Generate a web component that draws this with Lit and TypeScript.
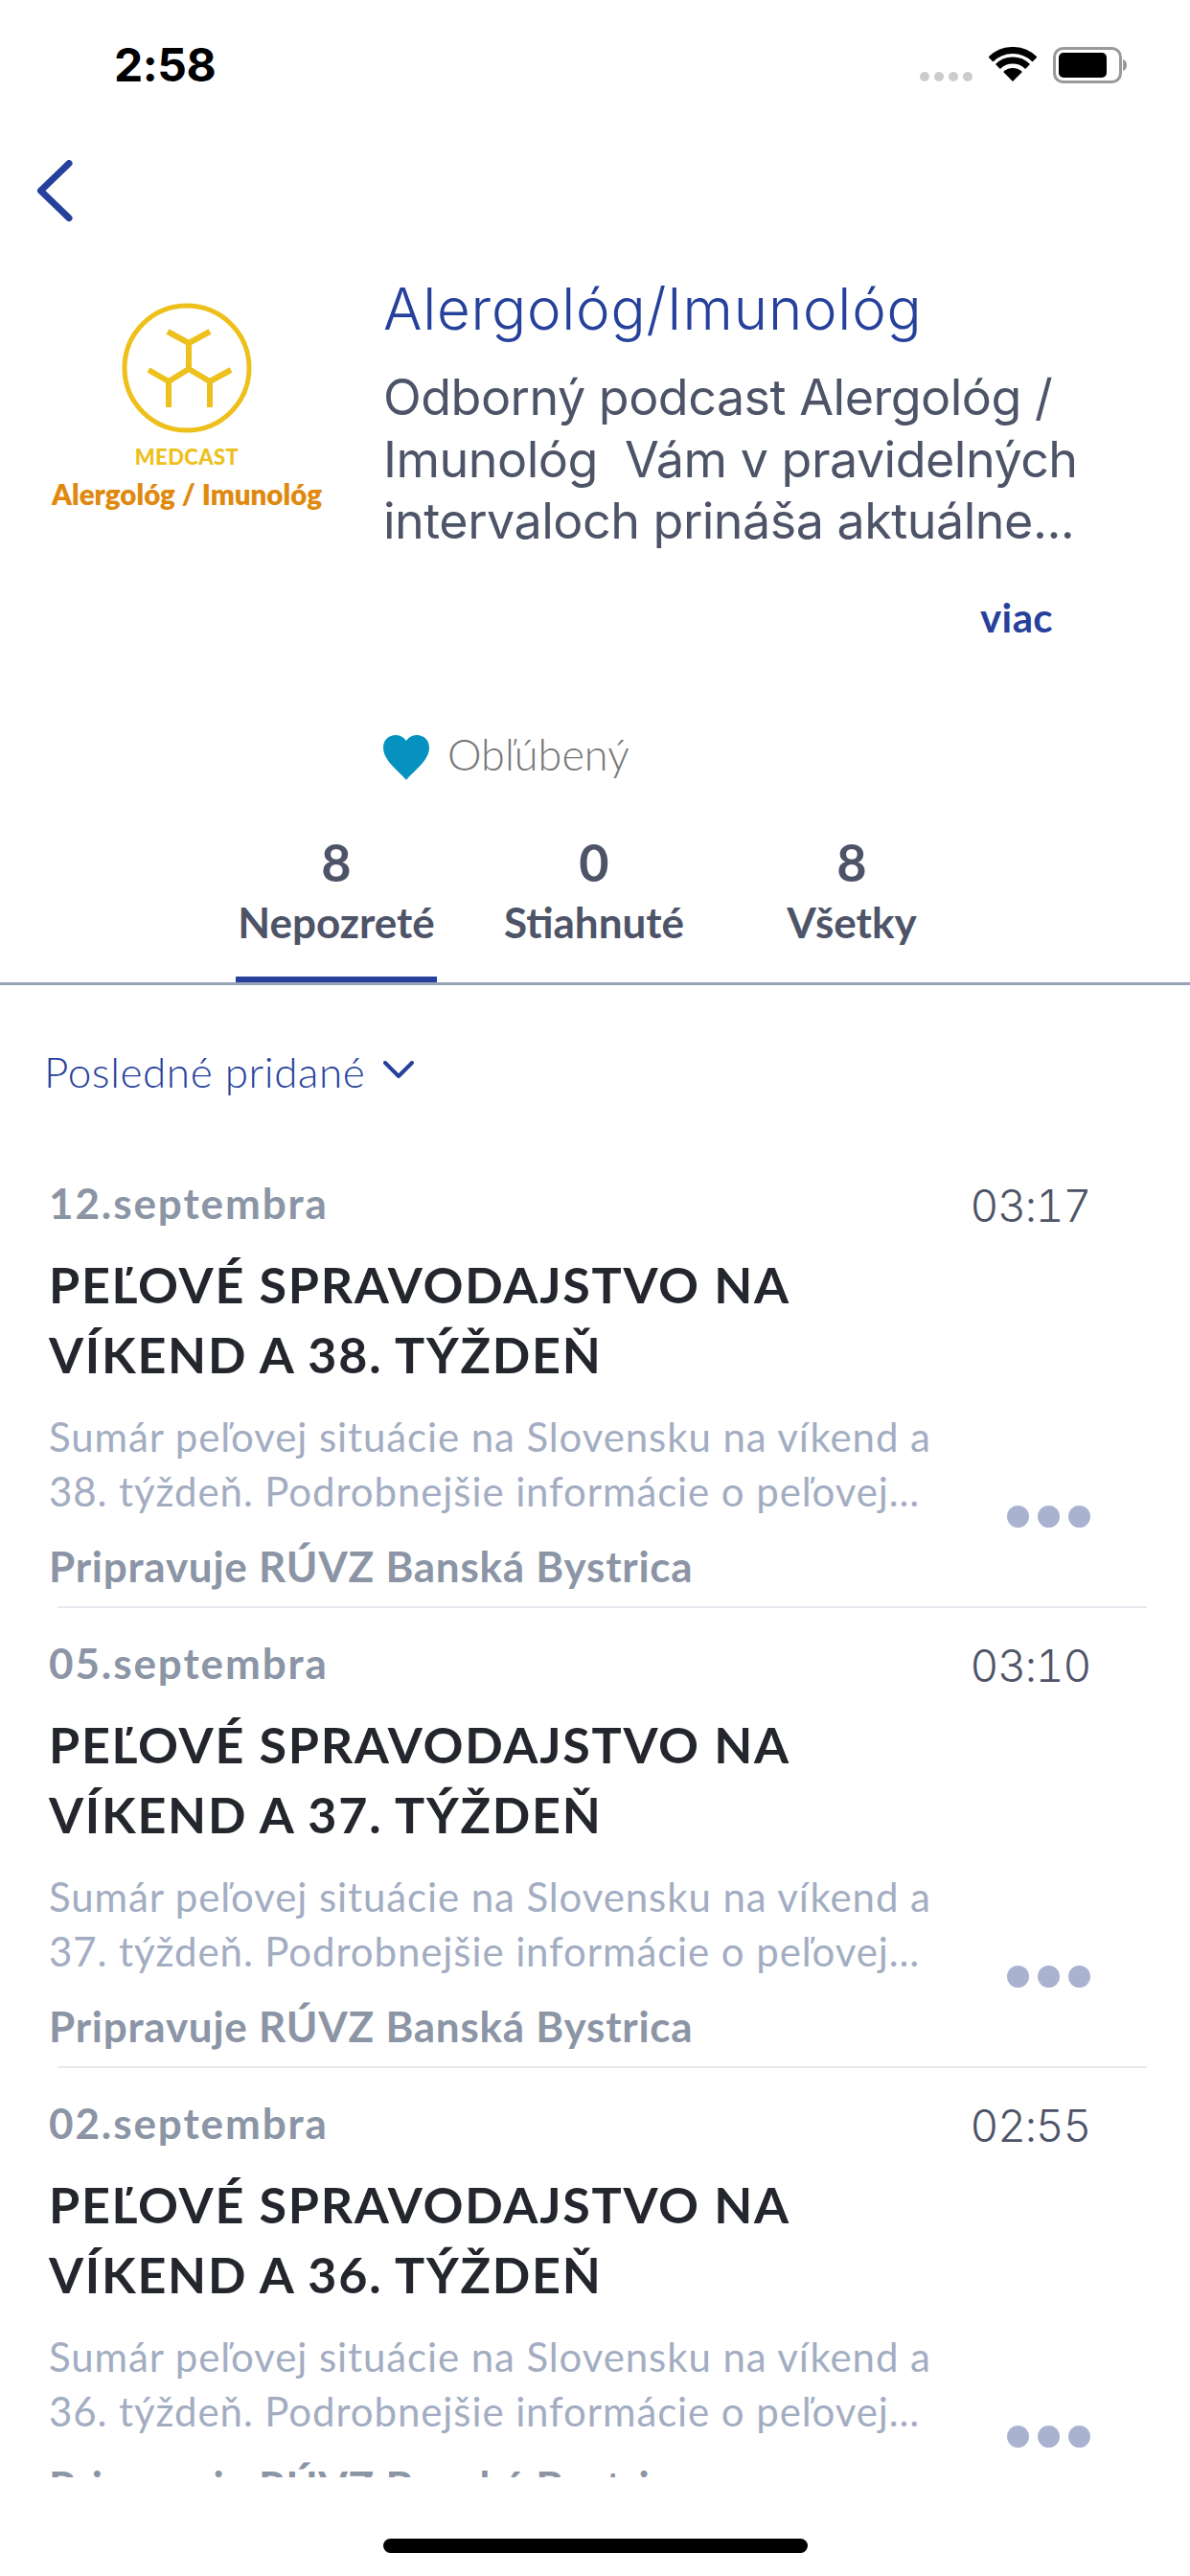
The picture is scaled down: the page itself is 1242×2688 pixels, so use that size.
import { LitElement, html, css } from "lit";
import { customElement } from "lit/decorators.js";

const items = [
  { date: "12.septembra", time: "03:17", wk: "38" },
  { date: "05.septembra", time: "03:10", wk: "37" },
  { date: "02.septembra", time: "02:55", wk: "36" },
];

@customElement("app-root")
export class AppRoot extends LitElement {
  static styles = css`
    :host { display: block; width: 1242px; height: 2688px; background: #fff; font-family: "Lato", sans-serif; overflow: hidden; }
    .status { height: 100px; display: flex; align-items: flex-start; box-sizing: border-box; padding: 49px 65px 0 119px; }
    .clock { font: 700 48px/37px "Inter", sans-serif; letter-spacing: -0.5px; color: #000; }
    .sys { margin-left: auto; display: flex; align-items: flex-start; gap: 17px; }
    .signal { display: flex; gap: 5px; margin-top: 26px; }
    .signal i { width: 10px; height: 10px; border-radius: 5px; background: #ccc; display: block; }
    .nav { height: 165px; box-sizing: border-box; padding: 67px 0 0 36px; }
    .nav svg { display: block; }
    .head { display: flex; height: 475px; }
    .logo { width: 390px; display: flex; flex-direction: column; align-items: center; padding-top: 51px; box-sizing: border-box; }
    .logo svg { display: block; }
    .mc { font: 900 22px/26px "Lato", sans-serif; color: #edc01c; margin-top: 12px; letter-spacing: 0.4px; }
    .ai { font: 800 29.5px/40px "Lato", sans-serif; color: #e0890f; margin-top: 6px; white-space: nowrap; }
    .info { margin-left: 10px; width: 770px; }
    .t { font: 300 60px/70px "Inter", sans-serif; letter-spacing: 0.8px; color: #26419b; margin-top: 22px; white-space: nowrap; }
    .d { font: 400 52px/64.5px "Inter", sans-serif; letter-spacing: -0.5px; color: #4e5468; margin-top: 26px; white-space: pre; }
    .more { font: 700 42px/50px "Lato", sans-serif; letter-spacing: 0.4px; color: #26419b; text-align: right; width: 699px; margin-top: 42px; }
    .fav { display: flex; align-items: flex-start; gap: 19px; margin-top: 98px; }
    .fav span { font: 300 45px/50px "Lato", sans-serif; color: #777; margin-top: -5px; }
    .tabs { display: flex; gap: 59px; height: 288px; box-sizing: border-box; padding-left: 246px; border-bottom: 3px solid #98a2b8; }
    .tab { width: 210px; display: flex; flex-direction: column; align-items: center; box-sizing: border-box; height: 285px; padding-top: 130px; }
    .tab.on { border-bottom: 6px solid #26419b; }
    .tab b { font: 700 54px/60px "Lato", sans-serif; color: #4e5468; }
    .tab span { font: 700 44px/50px "Lato", sans-serif; color: #4e5468; margin-top: 7px; white-space: nowrap; }
    .sort { height: 170px; box-sizing: border-box; padding: 65px 0 0 46px; display: flex; align-items: flex-start; gap: 19px; }
    .sort span { font: 300 44px/50px "Lato", sans-serif; letter-spacing: 0.6px; color: #26419b; }
    .sort svg { margin-top: 14px; }
    .list { height: 1387px; overflow: hidden; }
    .item { height: 480px; box-sizing: border-box; padding: 32px 104px 0 51px; display: flex; justify-content: space-between; position: relative; }
    .item::after { content: ""; position: absolute; left: 60px; right: 45px; bottom: 0; height: 2px; background: #e7e9ef; }
    .date { font: 700 44px/50px "Lato", sans-serif; letter-spacing: 1.9px; color: #8b95a5; }
    .name { font: 700 52px/73px "Lato", sans-serif; letter-spacing: 1.75px; color: #24262d; white-space: nowrap; }
    .name.a { margin-top: 24px; }
    .sum { font: 400 42px/57px "Lato", sans-serif; letter-spacing: 0.9px; color: #a3adc2; white-space: nowrap; }
    .sum.a { margin-top: 21px; }
    .by { font: 700 44px/50px "Lato", sans-serif; letter-spacing: 0.75px; color: #8b95a5; margin-top: 24px; white-space: nowrap; }
    .right { display: flex; flex-direction: column; align-items: flex-end; }
    .time { font: 300 46px/60px "Inter", sans-serif; font-variant-numeric: tabular-nums; letter-spacing: -1.2px; color: #4e5468; margin-top: -2px; }
    .dots { display: flex; gap: 9px; margin-top: 283px; }
    .dots i { width: 23px; height: 23px; border-radius: 50%; background: #a9b3d0; display: block; }
    .home { height: 103px; box-sizing: border-box; padding-top: 64px; display: flex; justify-content: center; }
    .home i { width: 443px; height: 15px; border-radius: 8px; background: #000; display: block; }
  `;

  render() {
    return html`
      <div class="status">
        <div class="clock">2:58</div>
        <div class="sys">
          <div class="signal"><i></i><i></i><i></i><i></i></div>
          <svg width="50" height="36" viewBox="0 0 50 36" fill="none">
            <path d="M2 13A32.5 32.5 0 0 1 48 13" stroke="#000" stroke-width="7"/>
            <path d="M9.44 20.44A22 22 0 0 1 40.56 20.44" stroke="#000" stroke-width="7"/>
            <path d="M25 36L15.1 26.1A14 14 0 0 1 34.9 26.1Z" fill="#000"/>
          </svg>
          <svg width="78" height="38" viewBox="0 0 78 38" fill="none">
            <rect x="1.5" y="1.5" width="69" height="35" rx="9" stroke="#999" stroke-width="3"/>
            <rect x="6" y="6" width="50" height="26" rx="5" fill="#000"/>
            <path d="M73 13C76 14 77 16 77 19C77 22 76 24 73 25Z" fill="#999"/>
          </svg>
        </div>
      </div>
      <div class="nav">
        <svg width="42" height="64" viewBox="0 0 42 64" fill="none">
          <path d="M36 3.5L6.5 32L36 60.5" stroke="#26419b" stroke-width="7" stroke-linecap="round" stroke-linejoin="round"/>
        </svg>
      </div>
      <div class="head">
        <div class="logo">
          <svg width="136" height="136" viewBox="0 0 136 136" fill="none">
            <circle cx="68" cy="68" r="65" stroke="#edc01c" stroke-width="5"/>
            <path d="M48 30L70 42L92 30M70 42V69M70 69L49 82L28 70M49 82V109M70 69L92 82L114 70M92 82V109" stroke="#edc01c" stroke-width="6"/>
          </svg>
          <div class="mc">MEDCAST</div>
          <div class="ai">Alergológ / Imunológ</div>
        </div>
        <div class="info">
          <div class="t">Alergológ/Imunológ</div>
          <div class="d">Odborný podcast Alergológ /
Imunológ  Vám v pravidelných
intervaloch prináša aktuálne...</div>
          <div class="more">viac</div>
          <div class="fav">
            <svg width="48" height="47" viewBox="0 0 48 47"><path d="M24 47C16 37 0 27 0 13C0 5 6 0 13 0C18 0 22 3 24 6C26 3 30 0 35 0C42 0 48 5 48 13C48 27 32 37 24 47Z" fill="#0692c0"/></svg>
            <span>Obľúbený</span>
          </div>
        </div>
      </div>
      <div class="tabs">
        <div class="tab on"><b>8</b><span>Nepozreté</span></div>
        <div class="tab"><b>0</b><span>Stiahnuté</span></div>
        <div class="tab"><b>8</b><span>Všetky</span></div>
      </div>
      <div class="sort">
        <span>Posledné pridané</span>
        <svg width="32" height="18" viewBox="0 0 32 18" fill="none"><path d="M2 2L16 16L30 2" stroke="#26419b" stroke-width="4" stroke-linecap="round" stroke-linejoin="round"/></svg>
      </div>
      <div class="list">
        ${items.map((it) => html`
          <div class="item">
            <div>
              <div class="date">${it.date}</div>
              <div class="name a">PEĽOVÉ SPRAVODAJSTVO NA</div>
              <div class="name">VÍKEND A ${it.wk}. TÝŽDEŇ</div>
              <div class="sum a">Sumár peľovej situácie na Slovensku na víkend a</div>
              <div class="sum">${it.wk}. týždeň. Podrobnejšie informácie o peľovej...</div>
              <div class="by">Pripravuje RÚVZ Banská Bystrica</div>
            </div>
            <div class="right">
              <div class="time">${it.time}</div>
              <div class="dots"><i></i><i></i><i></i></div>
            </div>
          </div>
        `)}
      </div>
      <div class="home"><i></i></div>
    `;
  }
}
